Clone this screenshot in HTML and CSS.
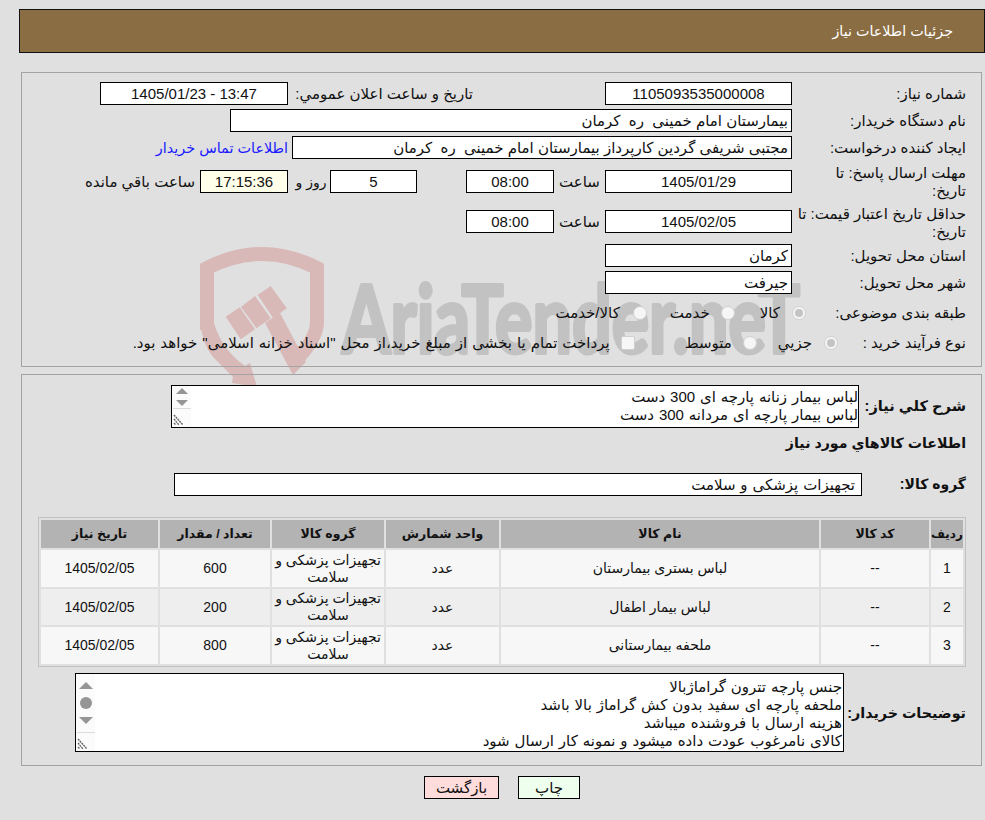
FILE: index.html
```html
<!DOCTYPE html>
<html lang="fa" dir="rtl">
<head>
<meta charset="utf-8">
<title>جزئیات اطلاعات نیاز</title>
<link rel="stylesheet" href="styles.css">
</head>
<body>
<svg class="watermark" viewBox="0 0 985 820" width="985" height="820" aria-hidden="true">
  <path class="wm-shield" d="M207 330 L207 268 Q262 240 317 268 L317 322 Q317 340 292 364" />
  <path class="wm-red" d="M200 323 Q203 345 213 357 L233 377 L232 383 L257 387 L250 363 L245 366 Q222 350 214 323 Z" />
  <polygon class="wm-red" points="225.700,316.700 239.700,307.300 255,329.300 240.700,339.300"/>
  <polygon class="wm-red" points="241,307 255,296 270.700,318.300 256.500,328.300"/>
  <polygon class="wm-red" points="257.700,295 270.700,286 286.700,308.300 273.300,318.300"/>
  <polygon class="wm-red" points="265,323 280,313 306,362 293,375"/>
  <text class="wm-text" x="342" y="353" textLength="458" lengthAdjust="spacingAndGlyphs">AriaTender.neT</text>
</svg>

<header class="title-bar"><h1 class="title">جزئیات اطلاعات نیاز</h1></header>

<section class="panel panel-info">
  <div class="row row-1">
    <span class="label">شماره نیاز:</span>
    <span class="field w-187 center">1105093535000008</span>
    <span class="label-2">تاریخ و ساعت اعلان عمومي:</span>
    <span class="field w-188 center" dir="ltr">1405/01/23 - 13:47</span>
  </div>
  <div class="row row-2">
    <span class="label">نام دستگاه خریدار:</span>
    <span class="field w-562">بیمارستان امام خمینی  ره  کرمان</span>
  </div>
  <div class="row row-3">
    <span class="label">ایجاد کننده درخواست:</span>
    <span class="field w-500">مجتبی شریفی گردین کارپرداز بیمارستان امام خمینی  ره  کرمان</span>
    <a class="contact" href="#">اطلاعات تماس خریدار</a>
  </div>
  <div class="row row-4">
    <span class="label">مهلت ارسال پاسخ: تا تاریخ:</span>
    <span class="field w-187 center">1405/01/29</span>
    <span class="hour">ساعت</span>
    <span class="field w-88 center">08:00</span>
    <span class="field w-87 center days">5</span>
    <span class="days-label">روز و</span>
    <span class="field w-88 center timer">17:15:36</span>
    <span class="remaining">ساعت باقي مانده</span>
  </div>
  <div class="row row-5">
    <span class="label">حداقل تاریخ اعتبار قیمت: تا تاریخ:</span>
    <span class="field w-187 center">1405/02/05</span>
    <span class="hour">ساعت</span>
    <span class="field w-88 center">08:00</span>
  </div>
  <div class="row row-6">
    <span class="label">استان محل تحویل:</span>
    <span class="field w-187">کرمان</span>
  </div>
  <div class="row row-7">
    <span class="label">شهر محل تحویل:</span>
    <span class="field w-187">جیرفت</span>
  </div>
  <div class="row row-8">
    <span class="label">طبقه بندی موضوعی:</span>
    <span class="radio on r-a"></span><span class="opt o-a">کالا</span>
    <span class="radio r-b"></span><span class="opt o-b">خدمت</span>
    <span class="radio r-c"></span><span class="opt o-c">کالا/خدمت</span>
  </div>
  <div class="row row-9">
    <span class="label">نوع فرآیند خرید :</span>
    <span class="radio on r-d"></span><span class="opt o-d">جزيي</span>
    <span class="radio r-e"></span><span class="opt o-e">متوسط</span>
    <span class="check"></span>
    <span class="opt o-f">پرداخت تمام یا بخشی از مبلغ خرید،از محل "اسناد خزانه اسلامی" خواهد بود.</span>
  </div>
</section>

<section class="panel panel-goods">
  <div class="row desc-row">
    <strong class="label-b lb-desc">شرح کلي نیاز:</strong>
    <div class="memo memo-short">
      <div>لباس بیمار زنانه پارچه ای 300 دست</div>
      <div>لباس بیمار پارچه ای مردانه 300 دست</div>
      <div class="sb sb-short" dir="ltr">
        <i class="up"></i><i class="down"></i>
        <span class="grip"><svg width="14" height="14" viewBox="0 0 14 14"><path d="M1 2l9 10M1 6l5 6M1 10l2 2" /></svg></span>
      </div>
    </div>
  </div>
  <h2 class="goods-title">اطلاعات کالاهاي مورد نیاز</h2>
  <div class="row group-row">
    <strong class="label-b lb-group">گروه کالا:</strong>
    <span class="field w-688">تجهیزات پزشکی و سلامت</span>
  </div>
  <div class="table-wrap">
    <table class="goods">
      <thead>
        <tr><th class="c1">ردیف</th><th class="c2">کد کالا</th><th class="c3">نام کالا</th><th class="c4">واحد شمارش</th><th class="c5">گروه کالا</th><th class="c6">تعداد / مقدار</th><th class="c7">تاریخ نیاز</th></tr>
      </thead>
      <tbody>
        <tr><td>1</td><td>--</td><td>لباس بستری بیمارستان</td><td>عدد</td><td>تجهیزات پزشکی و سلامت</td><td>600</td><td>1405/02/05</td></tr>
        <tr class="mid"><td>2</td><td>--</td><td>لباس بیمار اطفال</td><td>عدد</td><td>تجهیزات پزشکی و سلامت</td><td>200</td><td>1405/02/05</td></tr>
        <tr><td>3</td><td>--</td><td>ملحفه بیمارستانی</td><td>عدد</td><td>تجهیزات پزشکی و سلامت</td><td>800</td><td>1405/02/05</td></tr>
      </tbody>
    </table>
  </div>
  <div class="row notes-row">
    <strong class="label-b lb-notes">توضیحات خریدار:</strong>
    <div class="memo memo-tall">
      <div>جنس پارچه تترون گراماژبالا</div>
      <div>ملحفه پارچه ای سفید بدون کش گراماژ بالا باشد</div>
      <div>هزینه ارسال با فروشنده میباشد</div>
      <div>کالای نامرغوب عودت داده میشود و نمونه کار ارسال شود</div>
      <div class="sb sb-tall" dir="ltr">
        <i class="up"></i><b class="thumb"></b><i class="down"></i>
        <span class="grip"><svg width="14" height="14" viewBox="0 0 14 14"><path d="M1 2l9 10M1 6l5 6M1 10l2 2" /></svg></span>
      </div>
    </div>
  </div>
</section>

<div class="actions">
  <button class="btn btn-print" type="button">چاپ</button>
  <button class="btn btn-back" type="button">بازگشت</button>
</div>
</body>
</html>
```
FILE: styles.css
```css
html, body { margin: 0; padding: 0; }
body {
  width: 985px;
  height: 820px;
  overflow: hidden;
  background: #e0e0e0;
  color: #111;
  font: 15px/18px "Liberation Sans", "DejaVu Sans", sans-serif;
  position: relative;
  padding-top: 9px;
  box-sizing: border-box;
}
.watermark { position: absolute; left: 0; top: 0; z-index: -1; direction: ltr; }
.wm-shield { fill: none; stroke: #d9b8b8; stroke-width: 14; }
.wm-red { fill: #d9b8b8; }
.wm-text {
  fill: #c2c2c2;
  stroke: #c2c2c2;
  stroke-width: 4;
  stroke-linejoin: round;
  font: 700 94px "Lato", sans-serif;
  direction: ltr;
}

.title-bar {
  margin: 0 0 0 19px;
  height: 44px;
  background: #8b6d43;
  border: 1px solid #111;
  box-sizing: border-box;
  display: flex;
  align-items: center;
  padding-right: 31px;
}
.title { margin: 0; font-size: 14.3px; font-weight: 400; color: #fff; }

.panel {
  margin: 0 3px 0 0;
  width: 961px;
  box-sizing: border-box;
  border: 1px solid #a3a3a3;
  padding-right: 15px;
}
.panel-info { margin-top: 19px; height: 295px; padding-top: 9px; }
.panel-goods { margin-top: 7px; height: 392px; padding-top: 10px; }

.row { display: flex; align-items: flex-start; }
.label { width: 174px; flex: none; box-sizing: border-box; }
.field {
  flex: none;
  box-sizing: border-box;
  height: 23px;
  line-height: 21px;
  border: 1px solid #000;
  background: #fff;
  padding: 0 3px;
  white-space: pre;
  overflow: hidden;
}
.center { text-align: center; }
.w-187 { width: 187px; }
.w-188 { width: 188px; }
.w-562 { width: 562px; }
.w-500 { width: 500px; }
.w-88 { width: 88px; }
.w-87 { width: 87px; }
.w-688 { width: 688px; padding-right: 6px; word-spacing: .7px; }

.row-1 .label, .label-2 { padding-top: 3px; }
.label-2 { width: 185px; margin-right: 132px; }
.row-2 { margin-top: 4px; }
.row-2 .label { padding-top: 3px; }
.row-3 { margin-top: 4px; }
.row-3 .label { padding-top: 3px; }
.contact { color: #1a1aff; text-decoration: none; margin-right: 4px; padding-top: 3px; font-size: 14.4px; }
.row-4 { margin-top: 5px; height: 41px; }
.row-4 .label { padding-left: 12px; }
.row-4 .field { margin-top: 6px; }
.row-5 .field { margin-top: 5px; }
.hour { width: 51px; flex: none; text-align: center; margin-top: 9px; }
.row-5 .hour { margin-top: 8px; }
.days { margin-right: 49px; }
.days-label { width: 42px; flex: none; box-sizing: border-box; padding-left: 4px; font-size: 14px; text-align: center; margin-top: 9px; }
.timer { background: #ffffea; }
.remaining { margin-right: 5px; margin-top: 9px; }
.row-5 { height: 39px; }
.row-6 .label { padding-top: 3px; }
.row-7 { margin-top: 4px; }
.row-7 .label { padding-top: 3px; }
.row-8 { margin-top: 9px; align-items: center; height: 20px; }
.row-9 { margin-top: 10px; align-items: center; height: 20px; }
.opt { white-space: nowrap; }
.radio {
  flex: none;
  box-sizing: border-box;
  width: 14px;
  height: 14px;
  border-radius: 50%;
  border: 1px solid #d0d0d0;
  background: #f6f6f6;
  display: flex;
  align-items: center;
  justify-content: center;
}
.radio.on::after {
  content: "";
  width: 8px;
  height: 8px;
  border-radius: 50%;
  background: #c4c4c4;
}
.check {
  flex: none;
  box-sizing: border-box;
  width: 14px;
  height: 14px;
  border: 1px solid #d0d0d0;
  border-radius: 2px;
  background: #f6f6f6;
  margin-right: 50px;
}
.r-a { margin-right: -14px; }
.o-a { margin-right: 12px; }
.r-b { margin-right: 25px; }
.o-b { margin-right: 11px; }
.r-c { margin-right: 23px; }
.o-c { margin-right: 13px; }
.r-d { margin-right: -46px; }
.o-d { margin-right: 12px; }
.r-e { margin-right: 21px; }
.o-e { margin-right: 11px; }
.o-f { margin-right: 11px; word-spacing: .8px; }

.label-b { font-size: 14px; font-weight: 700; flex: none; white-space: nowrap; }
.lb-desc { width: 107px; padding-top: 12px; font-size: 14.6px; }
.lb-group { width: 104px; padding-top: 2px; }
.lb-notes { width: 122px; padding-top: 31px; font-size: 14.3px; }

.memo {
  flex: none;
  box-sizing: border-box;
  position: relative;
  border: 1px solid #000;
  background: #fff;
  padding: 2px 1px 0 0;
  overflow: hidden;
  word-spacing: .7px;
}
.memo-short { width: 688px; height: 43px; padding-right: 0; }
.memo-tall { width: 769px; height: 79px; padding-top: 4px; }
.sb {
  position: absolute;
  left: 0;
  top: 0;
  bottom: 0;
  width: 19px;
  background: #fbfbfb;
  display: flex;
  flex-direction: column;
  align-items: center;
}
.up, .down { width: 0; height: 0; border-left: 6px solid transparent; border-right: 6px solid transparent; }
.up { border-bottom: 6px solid #959595; margin-top: 2px; }
.down { border-top: 6px solid #959595; margin-top: 6px; }
.thumb { width: 12px; height: 12px; border-radius: 50%; background: #959595; margin-top: 8px; }
.sb-tall .up { margin-top: 8px; border-left-width: 7px; border-right-width: 7px; border-bottom-width: 7px; }
.sb-tall .down { margin-top: 8px; border-left-width: 7px; border-right-width: 7px; border-top-width: 7px; }
.grip {
  position: absolute;
  left: 1px;
  right: 0;
  bottom: 0;
  height: 19px;
  border-top: 1px solid #dcdcdc;
  display: flex;
  align-items: flex-end;
  box-sizing: border-box;
}
.grip svg path { fill: none; stroke: #666; stroke-width: 1.4; stroke-dasharray: 2 .7; }

.goods-title { margin: 6px 0 0; font-size: 14.2px; line-height: 18px; font-weight: 700; }
.group-row { margin-top: 21px; }
.table-wrap {
  margin: 21px 0 0;
  width: 928px;
  box-sizing: border-box;
  border: 1px solid #c2c2c2;
}
.goods { border-collapse: separate; border-spacing: 2px; width: 926px; table-layout: fixed; margin: 0; }
.goods th { background: #b3b3b3; font-weight: 700; height: 28px; padding: 0; font-size: 12.5px; }
.goods th.c1 { font-size: 12px; }
.goods td { text-align: center; padding: 0 3px; height: 37px; font-size: 14px; line-height: 17px; box-sizing: border-box; background: #f7f7f7; }
.goods .mid td { height: 36px; background: #eeeeee; }
.c1 { width: 32px; }
.c2 { width: 108px; }
.c3 { width: 318px; }
.c4 { width: 113px; }
.c5 { width: 112px; }
.c6 { width: 110px; }
.c7 { width: 117px; }
.notes-row { margin-top: 6px; }

.actions { display: flex; justify-content: center; margin: 10px 0 0; padding-left: 19px; }
.btn {
  font: inherit;
  height: 23px;
  box-sizing: border-box;
  border: 1px solid #000;
  padding: 0;
  color: #111;
}
.btn-print { width: 62px; background: #eeffee; margin-left: 19px; }
.btn-back { width: 75px; background: #ffdcdc; }
```
